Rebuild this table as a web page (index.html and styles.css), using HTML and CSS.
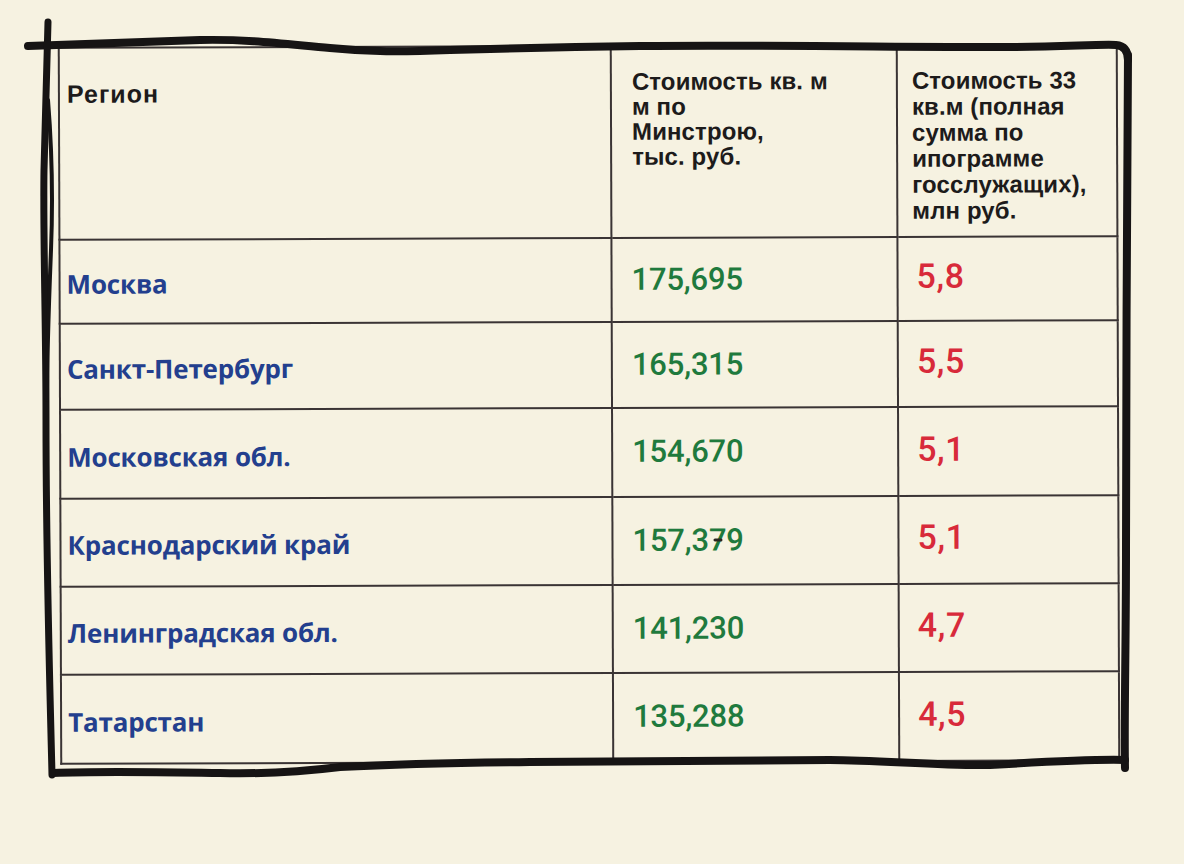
FILE: index.html
```html
<!DOCTYPE html>
<html lang="ru">
<head>
<meta charset="utf-8">
<title>Стоимость квадратного метра</title>
<link rel="stylesheet" href="styles.css">
</head>
<body>
<div class="sheet">
  <div class="table">
    <div class="cell head head-region">Регион</div>
    <div class="cell head head-col">Стоимость кв. м<br>м по<br>Минстрою,<br>тыс. руб.</div>
    <div class="cell head head-col head-wide">Стоимость 33<br>кв.м (полная<br>сумма по<br>ипограмме<br>госслужащих),<br>млн руб.</div>

    <div class="cell region">Москва</div>
    <div class="cell price">175,695</div>
    <div class="cell total">5,8</div>

    <div class="cell region">Санкт-Петербург</div>
    <div class="cell price">165,315</div>
    <div class="cell total">5,5</div>

    <div class="cell region">Московская обл.</div>
    <div class="cell price">154,670</div>
    <div class="cell total">5,1</div>

    <div class="cell region">Краснодарский край</div>
    <div class="cell price">157,3<span class="seven">7</span>9</div>
    <div class="cell total">5,1</div>

    <div class="cell region">Ленинградская обл.</div>
    <div class="cell price">141,230</div>
    <div class="cell total">4,7</div>

    <div class="cell region">Татарстан</div>
    <div class="cell price">135,288</div>
    <div class="cell total">4,5</div>
  </div>

  <svg class="frame" width="1184" height="864" viewBox="0 0 1184 864" aria-hidden="true">
    <g fill="none" stroke="#161414" stroke-linecap="round" stroke-linejoin="round">
      <path stroke-width="8" d="M28,46 C70,45 130,42 200,40 C250,39 285,44 330,48 C370,52 400,52 450,50 C520,48 560,47 640,46 C760,45 900,47 1000,47 C1060,47 1100,44 1116,45 Q1128,46 1128,60"/>
      <path stroke-width="8" d="M1128,55 C1127,200 1126,400 1126,550 C1126,650 1124,720 1125,768"/>
      <path stroke-width="8" d="M1125,760 C1090,759 1040,762 990,765 C940,766 880,760 830,760 C700,761 600,761 530,762 C440,763 380,765 340,767 C300,772 260,774 220,773 C150,772 100,771 53,773"/>
      <path stroke-width="7" d="M48,22 C47,60 46,100 44,170 C43,240 46,320 46,420 C46,560 50,690 52,775"/>
      <path stroke-width="4" d="M48,100 C52,150 53,200 51,250 C49,300 47,350 47,400"/>
    </g>
  </svg>
</div>
</body>
</html>
```
FILE: styles.css
```css
html, body {
  margin: 0;
  padding: 0;
}

body {
  background: #f6f2e1;
  width: 1184px;
  height: 864px;
  overflow: hidden;
}

.sheet {
  position: relative;
  width: 1184px;
  height: 864px;
  padding: 45px 0 0 59px;
  box-sizing: border-box;
}

.table {
  display: grid;
  grid-template-columns: 554px 286px 220px;
  grid-template-rows: 192px 84px 86px 89px 88px 88px 89px;
  width: 1060px;
  border-top: 2px solid #3a3434;
  transform: rotate(-0.2deg);
  transform-origin: 50% 50%;
}

.cell {
  box-sizing: border-box;
  border-right: 2px solid #3a3434;
  border-bottom: 2px solid #3a3434;
  display: flex;
  align-items: center;
}

.cell:nth-child(3n+1) {
  border-left: 2px solid #3a3434;
}

.head {
  display: block;
  font-family: "Liberation Sans", Arial, sans-serif;
  font-weight: bold;
  font-size: 24px;
  line-height: 25px;
  color: #1d1b1b;
  white-space: nowrap;
  letter-spacing: 0.1px;
}

.head-region {
  padding: 33px 0 0 7px;
  font-size: 25px;
  letter-spacing: 1px;
}

.head-col {
  padding: 22px 0 0 20px;
}

.head-wide {
  padding-left: 14px;
  line-height: 26px;
}

.region {
  font-family: "Open Sans", "Noto Sans", sans-serif;
  font-weight: 700;
  font-size: 26px;
  line-height: 1;
  color: #233f8e;
  padding: 4px 0 0 6px;
  letter-spacing: -0.2px;
}

.price {
  font-family: Roboto, "Noto Sans", sans-serif;
  font-weight: 500;
  font-size: 31px;
  line-height: 1;
  color: #1f7a3d;
  padding: 0 0 2px 19px;
  letter-spacing: -0.2px;
}

.total {
  font-family: Roboto, "Noto Sans", sans-serif;
  font-weight: 500;
  font-size: 34px;
  line-height: 1;
  color: #d82a3a;
  padding: 0 0 6px 18px;
  letter-spacing: 0.6px;
}

.seven {
  position: relative;
}

.seven::after {
  content: "";
  position: absolute;
  left: 5px;
  top: 14px;
  width: 9px;
  height: 3px;
  border-radius: 2px;
  background: #2a2520;
}

.frame {
  position: absolute;
  left: 0;
  top: 0;
  pointer-events: none;
}
```
